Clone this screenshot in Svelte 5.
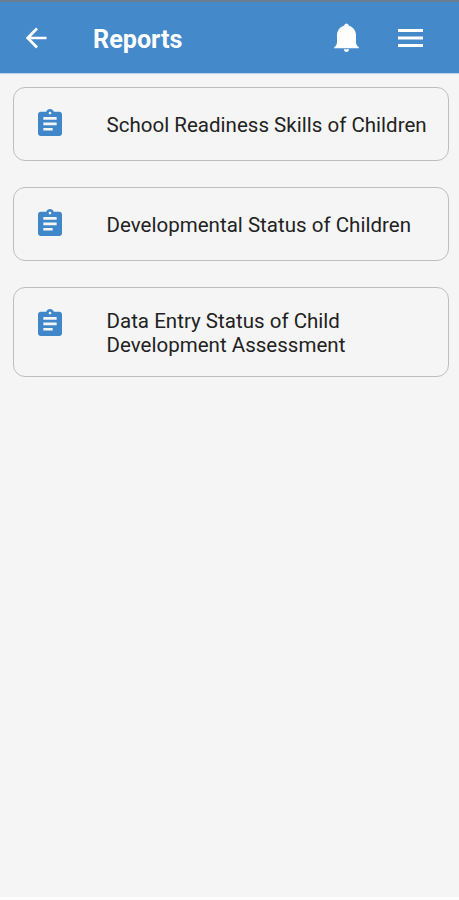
<script lang="ts">
	export let title: string = 'Reports';
	export let reports: string[] = [
		'School Readiness Skills of Children',
		'Developmental Status of Children',
		'Data Entry Status of Child Development Assessment'
	];
</script>

<div class="screen">
	<header class="app-bar">
		<button class="back" aria-label="Back">
			<svg width="21" height="22" viewBox="0 0 21 22">
				<path d="M20.5 11H2M11 1.5 1.7 11l9.3 9.5" />
			</svg>
		</button>
		<h1>{title}</h1>
		<button class="bell" aria-label="Notifications">
			<svg width="25" height="30" viewBox="0 0 25 30">
				<path d="M12.5.5c-1 0-1.800.7-2.200 1.900C5.800 4 3 7.500 3 12v7c0 2.200-.9 3.800-2.900 5.300v.9h24.800v-.9C22.900 22.800 22 21.200 22 19v-7c0-4.500-2.800-8-7.300-9.600-.4-1.200-1.200-1.900-2.200-1.900z" />
				<path d="M9.800 26.300h5.400c-.2 1.500-1.300 2.700-2.700 2.700s-2.500-1.200-2.700-2.700z" />
			</svg>
		</button>
		<button class="menu" aria-label="Menu">
			<svg width="25" height="18" viewBox="0 0 25 18">
				<path d="M0 1.600h25M0 9h25M0 16.400h25" />
			</svg>
		</button>
	</header>

	<main class="report-list">
		{#each reports as report}
			<div class="report-card">
				<svg class="clipboard" width="24" height="27" viewBox="3 1 18 20" preserveAspectRatio="none">
					<path d="M19 3h-4.180C14.400 1.840 13.300 1 12 1s-2.400.84-2.820 2H5c-1.100 0-2 .9-2 2v14c0 1.100.9 2 2 2h14c1.100 0 2-.9 2-2V5c0-1.100-.9-2-2-2zm-7 0c.55 0 1 .45 1 1s-.45 1-1 1-1-.45-1-1 .45-1 1-1zm2 14H7v-2h7v2zm3-4H7v-2h10v2zm0-4H7V7h10v2z" />
				</svg>
				<span class="report-name">{report}</span>
			</div>
		{/each}
	</main>
</div>

<style>
	:global(body) {
		background: #fdfdfd;
	}

	.screen {
		height: 897px;
		background: #f5f5f5;
		font-family: Roboto, 'Liberation Sans', sans-serif;
	}

	.app-bar {
		display: flex;
		align-items: center;
		box-sizing: border-box;
		height: 73px;
		padding: 1px 36px 0 26px;
		border-top: 2px solid #6b7d90;
		background: #4489c9;
		color: #fff;
		box-shadow: 0 1px 1px #c3d5ea;
	}

	button {
		display: flex;
		padding: 0;
		border: none;
		background: none;
	}

	.back path,
	.menu path {
		fill: none;
		stroke: #fff;
		stroke-width: 2.7;
	}

	.menu path {
		stroke-width: 3;
	}

	.bell {
		margin-right: 39px;
	}

	.bell path {
		fill: #fff;
	}

	h1 {
		flex: 1;
		margin: 3px 0 0 46px;
		font-size: 25.2px;
		font-weight: 700;
		line-height: 30px;
	}

	.report-list {
		display: flex;
		flex-direction: column;
		gap: 26px;
		padding: 13.5px 10px 0 13px;
	}

	.report-card {
		display: flex;
		align-items: flex-start;
		box-sizing: border-box;
		min-height: 74px;
		padding: 21px 16px 19px 24px;
		border: 1px solid #bdbdbd;
		border-radius: 12px;
	}

	.clipboard {
		flex: none;
		fill: #3f87c9;
	}

	.report-name {
		align-self: center;
		margin-left: 44.5px;
		color: #222;
		font-size: 20.5px;
		line-height: 24px;
		letter-spacing: 0.02px;
	}
</style>
